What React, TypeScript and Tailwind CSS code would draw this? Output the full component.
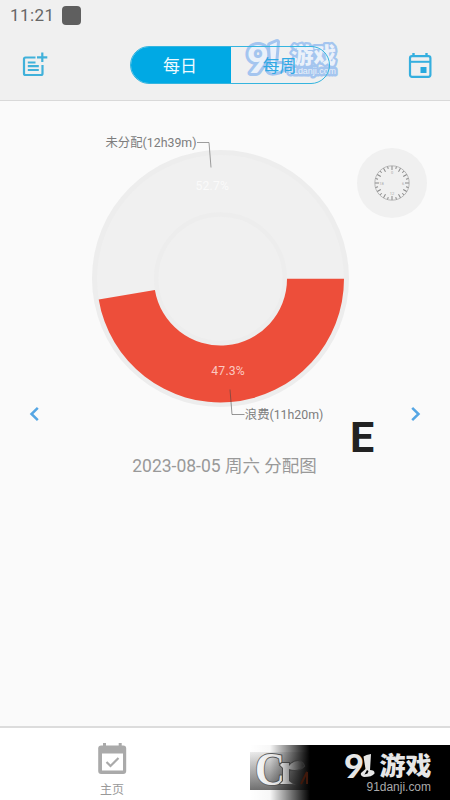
import React from 'react';

const sans = 'Roboto, "Noto Sans CJK SC", sans-serif';

function StatusBar() {
  return (
    <div className="flex h-[30px] items-center pl-[10px] pt-[1px] text-[17px] text-[#666]">
      <span className="w-[51.5px] tracking-[0.4px]">11:21</span>
      <span className="h-[19px] w-[19px] rounded-[4px] bg-[#5f5f5f]" />
    </div>
  );
}

function AddNoteIcon() {
  return (
    <svg width="28" height="28" viewBox="0 0 28 28" fill="none" stroke="#41b1da" strokeWidth="2.2">
      <path d="M15.5 6.5H5.5Q4 6.5 4 8V22.5Q4 24 5.5 24H21Q22.5 24 22.5 22.5V14" />
      <path d="M7.8 11.5H15.5M7.8 15.2H18.8M7.8 19H18.8" />
      <path d="M22.3 1.5V11M17 6.3H27.3" />
    </svg>
  );
}

function CalendarIcon() {
  return (
    <svg width="24" height="27" viewBox="0 0 24 27">
      <path d="M5.5 1V5M18.5 1V5" stroke="#35afdf" strokeWidth="2.4" />
      <rect x="2" y="4.2" width="20.4" height="20.6" rx="2" fill="none" stroke="#35afdf" strokeWidth="2.2" />
      <path d="M2 9.8H22" stroke="#35afdf" strokeWidth="2" />
      <rect x="12.5" y="15" width="6" height="6" fill="#28a9de" />
    </svg>
  );
}

function HeaderLogo() {
  return (
    <svg className="pointer-events-none absolute -top-[10px] left-[113px]" width="100" height="48" viewBox="243 36 100 48">
      <g fill="#eaf1fa" stroke="#a4c5ef" strokeLinejoin="round" paintOrder="stroke">
        <g strokeWidth="6">
          <text x="247" y="73" fontSize="37" fontWeight="900" fontFamily="Lato, sans-serif" textLength="22" lengthAdjust="spacingAndGlyphs">9</text>
          <path d="M270 45L277 42L275 65C281 63 286 64 284 68C281 72 270 75 268 70C267 67 271 66 271 61Z" />
        </g>
        <text x="288" y="73.5" fontSize="9.5" fontFamily="Liberation Sans, sans-serif" strokeWidth="5" textLength="48" lengthAdjust="spacingAndGlyphs">91danji.com</text>
        <text x="291" y="62.5" fontSize="22" fontWeight="900" fontFamily="Noto Sans CJK SC, sans-serif" strokeWidth="4.5" textLength="45" lengthAdjust="spacingAndGlyphs">游戏</text>
      </g>
    </svg>
  );
}

function Toggle() {
  return (
    <div className="relative ml-[82px] h-[38px] w-[200px]">
      <HeaderLogo />
      <div className="relative flex h-full overflow-hidden rounded-full border border-[#35b5df] text-[17px] text-[#2fa9e4]">
        <button className="w-[100px] bg-[#00a9e4] pr-[2px] pt-[3px] text-[#eefaff]">每日</button>
        <button className="flex-1 pr-[1px] pt-[3px]">每周</button>
      </div>
    </div>
  );
}

function Clock() {
  return (
    <div className="absolute left-[357px] top-[47px] flex h-[70px] w-[70px] items-center justify-center rounded-full bg-[#f0f0f0]">
      <svg width="36" height="36" viewBox="-18 -18 36 36">
        <circle r="17.2" fill="none" stroke="#aaa" strokeWidth=".8" />
        {Array.from({ length: 24 }, (_, i) => (
          <path key={i} d={i % 2 ? 'M0-17V-14.5' : 'M0-17V-13'} transform={`rotate(${i * 15})`} stroke="#888" strokeWidth="1" />
        ))}
        <g fill="#aaa" fontSize="4" textAnchor="middle">
          <text y="-9">0</text><text x="11" y="1.5">6</text><text y="12">12</text><text x="-10.5" y="1.5">18</text>
        </g>
      </svg>
    </div>
  );
}

function DonutChart() {
  return (
    <svg className="block" width="450" height="334" viewBox="0 101 450 334" fontFamily={sans} fontSize="12.5">
      <circle cx="220.5" cy="278.5" r="128.5" fill="#ededed" />
      <circle cx="220.5" cy="278.5" r="123.5" fill="#f0f0f0" />
      <circle cx="220.5" cy="278.7" r="64.3" fill="#f0f0f0" stroke="#ededed" strokeWidth="4.5" />
      <path d="M287 278.8H344A123.5 123.5 0 0 1 98.7 299.4L154.9 289.9A66.5 66.5 0 0 0 287 278.8Z" fill="#ed4e3a" />
      <path d="M197 142.5H209L211 167.5" fill="none" stroke="#858585" strokeWidth=".8" />
      <path d="M230 389.5L232 414.5H244.5" fill="none" stroke="#444" strokeOpacity=".7" strokeWidth=".8" />
      <g fill="#7d7d7d">
        <text x="105.5" y="147" textLength="91" lengthAdjust="spacingAndGlyphs">未分配(12h39m)</text>
        <text x="244.8" y="418.5" textLength="78.5" lengthAdjust="spacingAndGlyphs">浪费(11h20m)</text>
      </g>
      <text x="195.5" y="190" fill="#fafafa" fontSize="12.2" textLength="33.5">52.7%</text>
      <text x="211.3" y="375" fill="#fbc9c1" fontSize="12.2" textLength="33.5">47.3%</text>
    </svg>
  );
}

function Chevron({ right = false }: { right?: boolean }) {
  return (
    <svg width="10" height="16" viewBox="0 0 10 16" fill="none" stroke="#55a6e4" strokeWidth="2.5">
      <path d={right ? 'M1.2 1.8L7.5 8L1.2 14.2' : 'M8.8 1.8L2.5 8L8.8 14.2'} />
    </svg>
  );
}

function HomeTab() {
  return (
    <button className="ml-[97px] flex w-[30px] flex-col items-center text-[12px] text-[#999]">
      <svg width="30" height="34" viewBox="0 0 30 34">
        <path d="M7.5 1V6M23.2 1V6" stroke="#aaa" strokeWidth="3" />
        <rect x="1.2" y="3.5" width="28" height="28.5" rx="3" fill="#aaa" />
        <path d="M5 11.5H26V28.5H5Z" fill="#fff" />
        <path d="M9.5 20L13.5 24L21.5 16" fill="none" stroke="#aaa" strokeWidth="2.2" />
      </svg>
      <span className="mt-[5px] leading-[18px]">主页</span>
    </button>
  );
}

function FooterLogo() {
  return (
    <svg className="absolute left-[250px] top-[17px]" width="200" height="55" viewBox="250 745 200 55">
      <defs>
        <linearGradient id="fade"><stop offset="0" stopOpacity="0" /><stop offset=".1" stopOpacity=".03" /><stop offset=".3" stopOpacity="1" /><stop offset="1" /></linearGradient>
        <linearGradient id="plate" x1="0" y1="0" x2="0" y2="1"><stop stopColor="#ececec" /><stop offset="1" stopColor="#707070" /></linearGradient>
        <linearGradient id="shine" gradientUnits="userSpaceOnUse" x1="255" y1="0" x2="306" y2="0"><stop stopColor="#fafafa" /><stop offset=".5" stopColor="#ddd" /><stop offset=".75" stopColor="#777" /><stop offset="1" stopColor="#151515" /></linearGradient>
        <linearGradient id="rim" gradientUnits="userSpaceOnUse" x1="255" y1="0" x2="306" y2="0"><stop stopColor="#777" /><stop offset=".6" stopColor="#444" /><stop offset="1" stopColor="#333" /></linearGradient>
      </defs>
      <rect x="250" y="752" width="59" height="38" fill="url(#plate)" />
      <rect x="250" y="745" width="200" height="55" fill="url(#fade)" />
      <g fill="url(#shine)" stroke="url(#rim)" strokeWidth="2" paintOrder="stroke" fontFamily="Liberation Serif, serif" fontWeight="700">
        <text x="255" y="784.5" fontSize="46" textLength="30" lengthAdjust="spacingAndGlyphs">C</text>
        <path d="M282 763H289V766Q293 761 298 761Q303 762 304 766Q298 772 289 769V781L293 784H280L283 781V768L280 765Z" />
      </g>
      <path d="M301 784L307 772V784" fill="none" stroke="#40180b" strokeWidth="2" />
      <g fill="#e6e6e6">
        <text x="344" y="778" fontFamily="Lato, sans-serif" fontSize="33" fontWeight="900" textLength="20" lengthAdjust="spacingAndGlyphs">9</text>
        <path d="M363.5 756.5Q366 754.5 371 754L370 770Q375 770 374.5 773.5Q372 777 364 777Q360 776 361 773L365.5 769Z" />
        <path d="M367 770L368.5 771L367.5 773.5L364.5 774.5Z" fill="#000" />
        <text x="379.5" y="775" fontFamily="Noto Sans CJK SC, sans-serif" fontSize="25" fontWeight="900" textLength="52" lengthAdjust="spacingAndGlyphs">游戏</text>
        <text x="366.5" y="790.5" fill="#aaa" fontFamily="Liberation Sans, sans-serif" fontSize="12" textLength="64.5" lengthAdjust="spacingAndGlyphs">91danji.com</text>
      </g>
    </svg>
  );
}

export default function App() {
  return (
    <div className="flex h-[800px] w-[450px] flex-col overflow-hidden bg-[#fafafa]" style={{ fontFamily: sans }}>
      <header className="h-[101px] border-b border-[#d9d9d9] bg-[#f0f0f0]">
        <StatusBar />
        <div className="flex h-[70px] items-center pl-[20px]">
          <AddNoteIcon />
          <Toggle />
          <div className="ml-[78px]"><CalendarIcon /></div>
        </div>
      </header>
      <main className="relative flex-1">
        <DonutChart />
        <div className="-mt-[29px] flex justify-between px-[29px]">
          <button><Chevron /></button>
          <button><Chevron right /></button>
        </div>
        <h1 className="mt-[31px] w-[449px] text-center text-[17.5px] leading-[26px] text-[#999]">2023-08-05 周六 分配图</h1>
        <Clock />
        <span className="absolute left-[350px] top-[306px] text-[43px] font-bold leading-[60px] text-[#222]">E</span>
      </main>
      <nav className="relative flex h-[74px] items-start border-t-2 border-[#dcdcdc] bg-white pt-[14px]">
        <HomeTab />
        <FooterLogo />
      </nav>
    </div>
  );
}
